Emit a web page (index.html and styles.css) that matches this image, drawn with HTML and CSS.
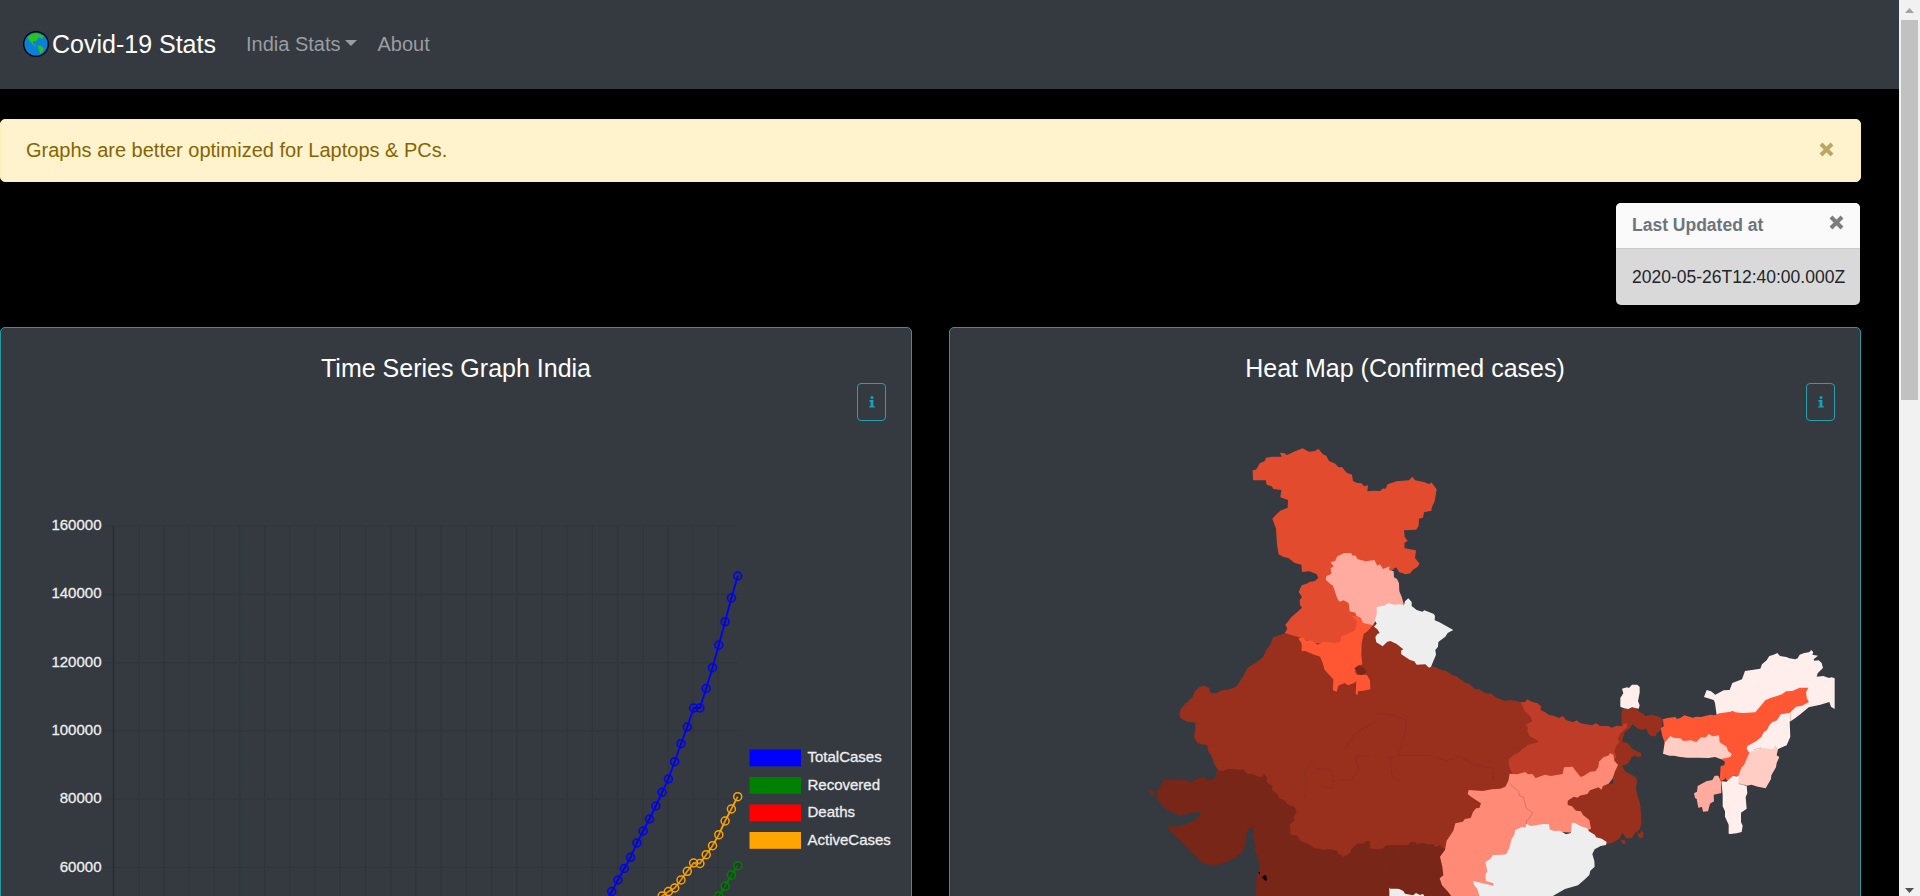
FILE: index.html
```
<!DOCTYPE html>
<html lang="en">
<head>
<meta charset="utf-8">
<title>Covid-19 Stats</title>
<link rel="stylesheet" href="styles.css">
</head>
<body>
<div class="page">
  <nav class="navbar">
    <a class="brand">
      <svg class="globe" viewBox="0 0 78 78"><circle cx="39" cy="39" r="37" fill="#0b7fd9" stroke="#05090e" stroke-width="4.5"/><path d="M13 20Q24 6 42 7L62 14 58 24 48 19 42 26 39 31 31 30 30 38 40 43 34 44 24 35 17 25Z" fill="#27c41f"/><path d="M44 44L54 44 63 53 59 62 52 69 47 55Z" fill="#27c41f"/></svg>
      <span>Covid-19 Stats</span>
    </a>
    <a class="nav-link">India Stats<span class="caret"></span></a>
    <a class="nav-link">About</a>
  </nav>
  <main class="content">
    <div class="alert"><span>Graphs are better optimized for Laptops &amp; PCs.</span>
      <svg class="close" viewBox="0 0 15 15"><path d="M2 2L13 13M13 2L2 13"/></svg>
    </div>
    <div class="toast">
      <div class="toast-header"><strong>Last Updated at</strong><svg class="close" viewBox="0 0 15 15"><path d="M2 2L13 13M13 2L2 13"/></svg></div>
      <div class="toast-body">2020-05-26T12:40:00.000Z</div>
    </div>
    <div class="cards">
      <section class="card">
        <h5 class="card-title">Time Series Graph India</h5>
        <button class="info"><svg viewBox="0 0 6 12"><circle cx="3" cy="1.6" r="1.5"/><path d="M.3 4H4.4V10.2H5.8V11.6H.2V10.2H1.5V5.4H.3Z"/></svg></button>
        <svg class="plot" id="chart" viewBox="26 421 860 475"></svg>
      </section>
      <section class="card">
        <h5 class="card-title">Heat Map (Confirmed cases)</h5>
        <button class="info"><svg viewBox="0 0 6 12"><circle cx="3" cy="1.6" r="1.5"/><path d="M.3 4H4.4V10.2H5.8V11.6H.2V10.2H1.5V5.4H.3Z"/></svg></button>
        <svg class="plot" viewBox="975 421 860 475">
          <!-- west: Gujarat, Maharashtra, Rajasthan, Madhya Pradesh -->
          <g transform="translate(1130 650) scale(.33333)">
            <path class="deepest" d="M262 358L252 388 230 390 224 381 205 384 192 391 180 396 165 389 140 391 104 387 94 403 84 420 78 440 92 462 106 476 128 487 152 498 178 489 208 486 212 495 190 514 166 523 138 532 112 524 118 540 152 572 190 612 215 637 248 648 286 638 325 618 340 600 347 576 350 547 357 536 367 533 372 545 369 562 376 582 374 602 384 625 390 650 379 684 378 738H920V560L498 450 380 360 320 350Z"/>
            <path class="deepest" d="M54 425L64 418 72 424 68 438Z"/>
            <path class="deep" d="M415 0L402 24 384 38 362 48 345 72 340 84 318 110 298 118 278 122 256 130 241 128 237 113 222 107 208 112 194 124 188 140 165 162 152 177 148 194 152 205 171 215 197 218 195 242 192 262 202 278 213 283 232 285 234 302 246 320 252 340 264 361 282 362 292 356 325 359 340 358 352 371 368 372 382 379 395 382 403 372 411 384 409 395 428 408 426 420 442 432 447 443 462 450 474 464 494 470 500 489 489 502 495 510 479 523 482 555 502 556 510 572 520 576 540 584 552 594 580 599 600 598 621 602 626 612 641 620 661 609 663 598 681 581 704 580 706 573 719 574 722 585 717 594 736 598 757 596 769 586 790 584 804 590 827 590 831 580 846 576 862 583 900 583H1000V92L905 50 850 40 800 0Z"/>
            <path fill="#000" d="M384 668L390 665 390 672ZM393 680L399 681 402 674 410 678 409 684 412 690 406 692 400 687Z"/>
            <path class="none" d="M778 714L794 710 820 723 825 731 849 736 858 729 870 735 885 730 900 740H778Z"/>
          </g>
          <!-- east: Uttar Pradesh, Bihar, West Bengal, Jharkhand, Chhattisgarh, Odisha -->
          <g transform="translate(1400 660) scale(.33333)">
            <path class="deepest" d="M-20 540L40 545 150 560V720H80L66 697 40 698 20 685 0 686H-30Z"/>
            <path class="deep" d="M-90-30H30L95 18 107 22 126 31 140 34 156 44 174 51 181 64 198 69 205 81 220 90 238 87 244 98 263 105 276 104 284 116 300 120 311 126 330 122 365 127 420 200 410 250 345 400 180 550 130 566 120 556 105 561 100 551 85 554 75 549 50 551 45 545 33 546 25 555-90 556Z"/>
            <path class="faint" d="M-80 120V158L-25 165 19 180 14 222-5 286H90L140 302 180 290 225 315 280 325V360M-75 185L-135 220-165 270M-5 288L-30 290-25 345 0 365M-92 288H-131V305L-124 330-145 360-180 360-202 365V385L-238 378M-285 415V330L-265 310-250 325-207 330-202 365"/>
            <path class="deep" d="M665 148L690 146 708 141 716 154 730 161 735 169 757 164 775 170 790 178 781 213 773 217 766 229 753 228 745 221 738 205 728 210 714 206 697 193 690 205 675 215 669 233 666 246 682 248 697 266 724 280 723 290 711 290 706 286 695 291 685 310 666 319 675 334 707 352 711 360 708 387 712 405 720 430 723 460 724 492 718 510 704 520 696 535 679 535 667 518 658 537 636 549 620 552 580 530 500 450V400L640 370 630 290 645 235 664 205Z"/>
            <path class="deep" d="M712 518L721 521 723 510 731 520 727 535 716 532ZM662 541L674 540 678 550 669 552Z"/>
            <path class="bihar" d="M362 127L376 126 381 118 397 126 413 130 424 140 421 149 438 158 445 164 463 168 477 174 489 168 498 180 519 187 530 181 542 190 576 196 588 189 600 198 625 198 635 203 650 197 668 199 670 191 682 190 680 203 662 219 653 236 659 246 648 258 643 274 649 290 620 330 560 350 460 360 340 345 327 320 326 298 340 286 354 280 367 266 376 262 382 255 413 247 412 241 389 228 382 215 384 203 376 194 398 184 388 166 374 154Z"/>
            <path class="mid" d="M329 341L352 343 376 336 384 343 397 342 407 354 435 344 452 348 488 342 492 322 518 320 525 330 542 351 552 347 570 335 586 334 595 322 597 305 611 291 625 287 630 280 640 284 643 302 654 315 645 334 638 355 626 371 609 378 604 389 596 382 570 391 562 402 539 407 533 413 521 410 503 422 503 435 516 439 528 452 543 454 549 465 568 480 573 506 540 520 400 510 340 570 280 720H150L153 707 142 693 126 676 119 655 130 646 127 620 120 590 135 570 140 542 160 512 166 490 188 485 195 477 212 474 219 456 228 445 238 444 243 430 214 411 203 402 206 390 248 393 276 388 301 386 316 380 325 363Z"/>
            <path class="border" d="M330 370L341 382 356 393 358 407 370 411 379 445 398 458 389 474 379 482V492"/>
            <path class="none" d="M378 491L392 498 430 492 447 493 449 508 461 513 480 512 498 523 513 519 515 489 523 488 543 499 561 505 567 514 585 525 588 532 605 536 620 546 618 555 602 558 584 568 577 582 583 603 584 620 571 632 568 645 553 659 534 676 495 687 455 710H239L232 687 223 676 219 663 258 672 281 677 280 670 258 663 256 644 262 634 256 606 270 598 279 585 306 584 318 583 328 564 335 536 344 522 345 511 365 501 378 501Z"/>
          </g>
          <!-- north: Jammu and Kashmir, Punjab, Haryana, Himachal, Uttarakhand -->
          <g transform="translate(1220 430) scale(.33333)">
            <path class="deep" d="M220 590L195 610 182 614 160 622 150 646 140 656 130 680 114 694 95 706 82 714 70 738 58 756 50 772 30 778 0 782V850H900V816L874 810 853 812 825 801 815 792 797 790 780 779 765 778 749 763 731 757 710 742 690 737 670 722 646 716 628 706 550 580Z"/>
            <path class="high" d="M98 121L108 119 120 99 134 94 138 83 158 80 185 80 180 68 192 69 201 75 225 64 248 55 267 65 285 63 295 56 309 73 319 77 327 93 346 101 356 112 366 111 380 128 396 134 399 153 411 159 425 160 432 169 444 166 442 184 463 182 480 183 490 175 496 177 503 163 529 154 567 151 577 140 585 151 612 156 628 163 634 157 650 178 644 214 636 230 634 242 612 247 609 263 597 266 596 287 589 299 552 301 554 320 563 333 553 339 554 355 588 361 585 384 599 401 592 411 578 420 571 430 557 433 537 426 528 412 450 470 350 520 295 455 262 461 267 456 285 453 295 443 290 433 269 424 246 426 244 404 224 399 205 384 190 381 176 373 171 344 168 296 157 266 168 254 181 242 203 233 204 210 181 202 184 180 160 177 155 169 140 164 137 151 99 151Z"/>
            <path class="high" d="M264 460L245 466 236 486 246 501 239 511 240 525 246 533 214 562 196 584 202 596 194 609 245 624 280 640 360 640 430 590 420 547 350 460 290 454Z"/>
            <path class="haryana" d="M235 626L247 621 259 632 277 632 292 644 312 635 344 639 361 636 364 619 391 608 406 600 411 574 392 556 412 560 435 578 460 584 444 602 431 612 425 640 424 674 427 703 412 711 405 725 411 735 440 734 450 751 451 778 430 782 414 784 413 795 407 792 409 754 401 760 384 766 374 759 355 767 350 785 339 781 340 748 314 720 307 696 300 680 279 673 256 663 245 664 245 640Z"/>
            <path class="deepest" d="M403 715L418 705 439 720 437 730 424 736 413 729Z"/>
            <path class="hp" d="M331 396L345 394 352 379 373 369 393 369 399 378 406 376 413 388 438 394 463 390 472 407 480 403 489 417 509 409 507 420 521 424 522 442 531 447 537 460 538 484 545 500 552 525 548 532 510 540 475 560 459 586 430 579 421 563 409 557 406 548 389 544 386 520 371 511 358 515 351 503 339 467 330 461 317 449 319 439 334 431 332 415 341 409Z"/>
            <path class="none" d="M470 531L492 527 505 519 521 524 540 523 552 526 555 514 565 505 575 516 575 528 590 540 607 545 613 541 640 551 645 557 644 571 657 576 700 600 683 609 676 620 655 636 654 650 646 660 648 674 633 710 627 713 616 703 590 704 583 694 570 690 544 673 543 662 550 658 530 642 511 633 502 635 488 649 469 637 466 621 472 612 479 609 472 598 462 590 470 581 464 570 470 555Z"/>
          </g>
          <!-- north-east states -->
          <g transform="translate(1560 630) scale(.33333)">
            <path class="low" d="M186 176L201 172 207 174 216 164 232 164 239 171 239 188 234 213 239 226 236 236 216 232 205 237 192 235 181 230 181 204 190 190Z"/>
            <path class="low" d="M432 201L440 180 453 184 466 194 491 181 509 180 517 159 546 148 555 123 601 116 606 103 620 91 628 78 641 74 652 69 660 78 679 81 688 85 706 88 713 85 719 74 733 69 747 67 754 60 760 67 757 74 774 77 761 88 763 92 776 91 785 99 789 114 773 130 770 140 790 138 807 144 815 142 824 145V237L813 230 808 216 781 224 746 232 739 238 721 253 702 267 689 275 691 320 680 346 650 359 590 375 550 375 560 270 470 255 465 219 461 210Z"/>
            <path class="low2" d="M317 319L332 314 358 318 366 324 394 323 405 327 422 314 440 313 447 302 459 309 485 307 490 338 511 350 514 366 516 373 513 380 492 391 465 381 445 384 416 383 381 383 356 380 343 377 328 377 309 371Z"/>
            <path class="low2" d="M570 365L596 359 603 353 640 358 646 346 654 358 650 376 658 381 650 399 648 412 634 436 633 447 617 475 594 470 574 464 560 467 532 462 530 430 545 390Z"/>
            <path class="haryana" d="M309 268L322 264 347 261 350 267 361 264 373 256 398 263 409 260 423 261 451 254 464 256 478 250 512 245 517 242 526 247 549 249 586 247 601 229 616 211 631 204 666 193 678 184 697 183 719 173 745 173 738 187 741 206 747 216 726 227 708 230 690 248 662 253 651 271 636 277 627 287 621 300 611 307 604 321 588 334 562 348 560 356 568 368 557 393 552 405 544 413 535 438 517 437 507 453 499 451 498 444 488 452 479 451 482 408 493 406 495 395 482 387 510 382 517 373 504 363 500 350 479 337 477 316 459 319 446 312 438 322 423 322 409 336 393 331 370 333 361 325 340 323 331 318 314 338 307 318 302 294 311 289Z"/>
            <path class="pink" d="M475 437L464 437 457 450 439 454 413 468 411 485 402 490 405 504 410 507 415 533 426 531 429 545 444 544 450 521 462 514 461 494 484 489 483 455Z"/>
            <path class="low" d="M484 454L500 455 511 445 519 437 536 441 536 461 560 468 562 490 557 502 560 536 543 548 543 576 548 587 545 606 530 610 511 612 506 611 506 584 495 560 495 544 488 529 488 493Z"/>
            <path class="border" d="M692 248V272M535 461L560 466M580 360L604 353"/>
          </g>
        </svg>
      </section>
    </div>
  </main>
</div>
<div class="scrollbar">
  <svg viewBox="0 0 21 20"><path d="M6 13L10.5 8 15 13Z" fill="#a3a3a3"/></svg>
  <div class="thumb"></div>
  <svg class="down" viewBox="0 0 21 20"><path d="M6 12L10.5 17 15 12Z" fill="#505050"/></svg>
</div>
<script src="chart.js"></script>
</body>
</html>
```
FILE: styles.css
```
* { box-sizing: border-box; }
body { margin: 0; height: 896px; overflow: hidden; display: flex; background: #000; font: 20px/30px "Liberation Sans", Arial, sans-serif; }
svg { display: block; }
.page { flex: 1; min-width: 0; }
.navbar { height: 89px; background: #343a40; display: flex; align-items: center; padding: 0 23px 2px; color: #9a9da0; }
.brand { display: flex; align-items: center; gap: 3px; margin-right: 20px; color: #fff; font-size: 25px; }
.globe { width: 26px; height: 26px; }
.nav-link { padding: 0 10px; display: flex; align-items: center; }
.caret { border: 6px solid transparent; border-top-color: currentColor; border-bottom: 0; margin-left: 5px; margin-top: -2px; }
.content { width: 1861px; padding-top: 30px; }
.alert { height: 63px; padding: 0 26px 2px 25px; display: flex; align-items: center; justify-content: space-between; background: #fff3cd; color: #856404; border: 1px solid #ffeeba; border-radius: 5px; }
.close { width: 15px; height: 15px; fill: none; stroke: #bba764; stroke-width: 4; }
.toast { width: 244px; height: 102px; margin: 21px 1px 0 auto; border-radius: 5px; overflow: hidden; font-size: 17.5px; background: #d9d9d9; color: #212529; }
.toast-header { height: 46px; padding: 0 16px 2px; display: flex; justify-content: space-between; align-items: center; color: #6c757d; background: #fafafa; border-bottom: 1px solid #c9c9c9; }
.toast-header .close { stroke: #7d7d7d; margin-top: -4px; }
.toast-body { padding: 13px 16px; white-space: nowrap; }
.cards { display: grid; grid-template-columns: 1fr 1fr; gap: 37px; margin-top: 22px; }
.card { height: 600px; padding: 25px; display: flex; flex-direction: column; background: #343a40; border: 1px solid #2797a3; border-radius: 5px; }
.card-title { margin: 0; text-align: center; color: #fff; font-size: 25px; font-weight: 400; line-height: 30px; }
.info { align-self: flex-end; width: 29px; height: 38px; padding: 0; display: flex; align-items: center; justify-content: center; background: none; border: 1px solid #26a0ad; border-radius: 4px; }
.info svg { width: 6px; height: 12px; fill: #17a2b8; }
.plot { width: 860px; height: 475px; }
#chart { overflow: visible; }
.grid { stroke: #30353b; stroke-width: 1.2; }
.axis { stroke: #272b30; stroke-width: 1.3; }
.label { fill: #eee; stroke: #eee; stroke-width: .3; font-size: 15px; }
.series { fill: none; stroke-width: 1.8; }
.dot { fill: rgba(0, 0, 0, .1); stroke-width: 1.5; }
.deepest { fill: #782618; }
.deep { fill: #99301e; }
.bihar { fill: #bf3d28; }
.high { fill: #e34b2e; }
.haryana { fill: #ff5734; }
.mid { fill: #ff8b77; }
.hp { fill: #ffab9f; }
.pink { fill: #ffab9f; }
.low2 { fill: #ffcdc4; }
.low { fill: #ffeeeb; }
.none { fill: #eee; }
.border { fill: none; stroke: rgba(90, 45, 40, .35); stroke-width: 2; }
.faint { fill: none; stroke: rgba(70, 30, 30, .2); stroke-width: 2; }
.scrollbar { width: 21px; background: #f1f1f1; display: flex; flex-direction: column; }
.scrollbar svg { width: 21px; height: 20px; }
.thumb { height: 380px; margin: 0 2px; background: #c1c1c1; }
.scrollbar .down { margin-top: auto; }
```
FILE: chart.js
```
const NS = 'http://www.w3.org/2000/svg';
const chart = document.getElementById('chart');
function add(tag, attrs, text) {
  const el = document.createElementNS(NS, tag);
  for (const key in attrs) el.setAttribute(key, attrs[key]);
  if (text) el.textContent = text;
  chart.appendChild(el);
}
for (let i = 0; i < 6; i++) {
  const y = 526 + i * 68.3;
  add('line', { x1: 103, x2: 737, y1: y, y2: y, class: 'grid' });
  add('text', { x: 101.5, y: y + 4, 'text-anchor': 'end', class: 'label' }, String(160000 - i * 20000));
}
for (let i = 0; i < 25; i++) {
  const x = 113.5 + i * 25.2;
  add('line', { x1: x, x2: x, y1: 526, y2: 900, class: i ? 'grid' : 'axis' });
}
// Pixel heights of the daily points, newest first.
const series = [
  ['blue', [576, 598, 621.7, 645, 667.7, 688.5, 708, 708, 727, 743.7, 761.7, 779, 792.3, 806, 819, 831, 843, 857.3, 868.5, 880, 891.5, 903]],
  ['green', [865.7, 875, 886.3, 896, 905]],
  ['orange', [796.7, 809, 821, 834.7, 845.7, 854.7, 863.5, 863, 871.3, 880, 888, 891.5, 896, 903]]
];
for (const [color, ys] of series) {
  const pts = ys.map((y, i) => [737.7 - i * 6.3, y]);
  add('polyline', { points: pts.join(' '), stroke: color, class: 'series' });
  for (const [cx, cy] of pts) add('circle', { cx, cy, r: 4, stroke: color, class: 'dot' });
}
[['TotalCases', 'blue'], ['Recovered', 'green'], ['Deaths', 'red'], ['ActiveCases', 'orange']].forEach(([name, color], i) => {
  const y = 749.5 + i * 27.5;
  add('rect', { x: 749.5, y, width: 51.5, height: 16.8, fill: color });
  add('text', { x: 807.5, y: y + 12.5, class: 'label' }, name);
});
```
